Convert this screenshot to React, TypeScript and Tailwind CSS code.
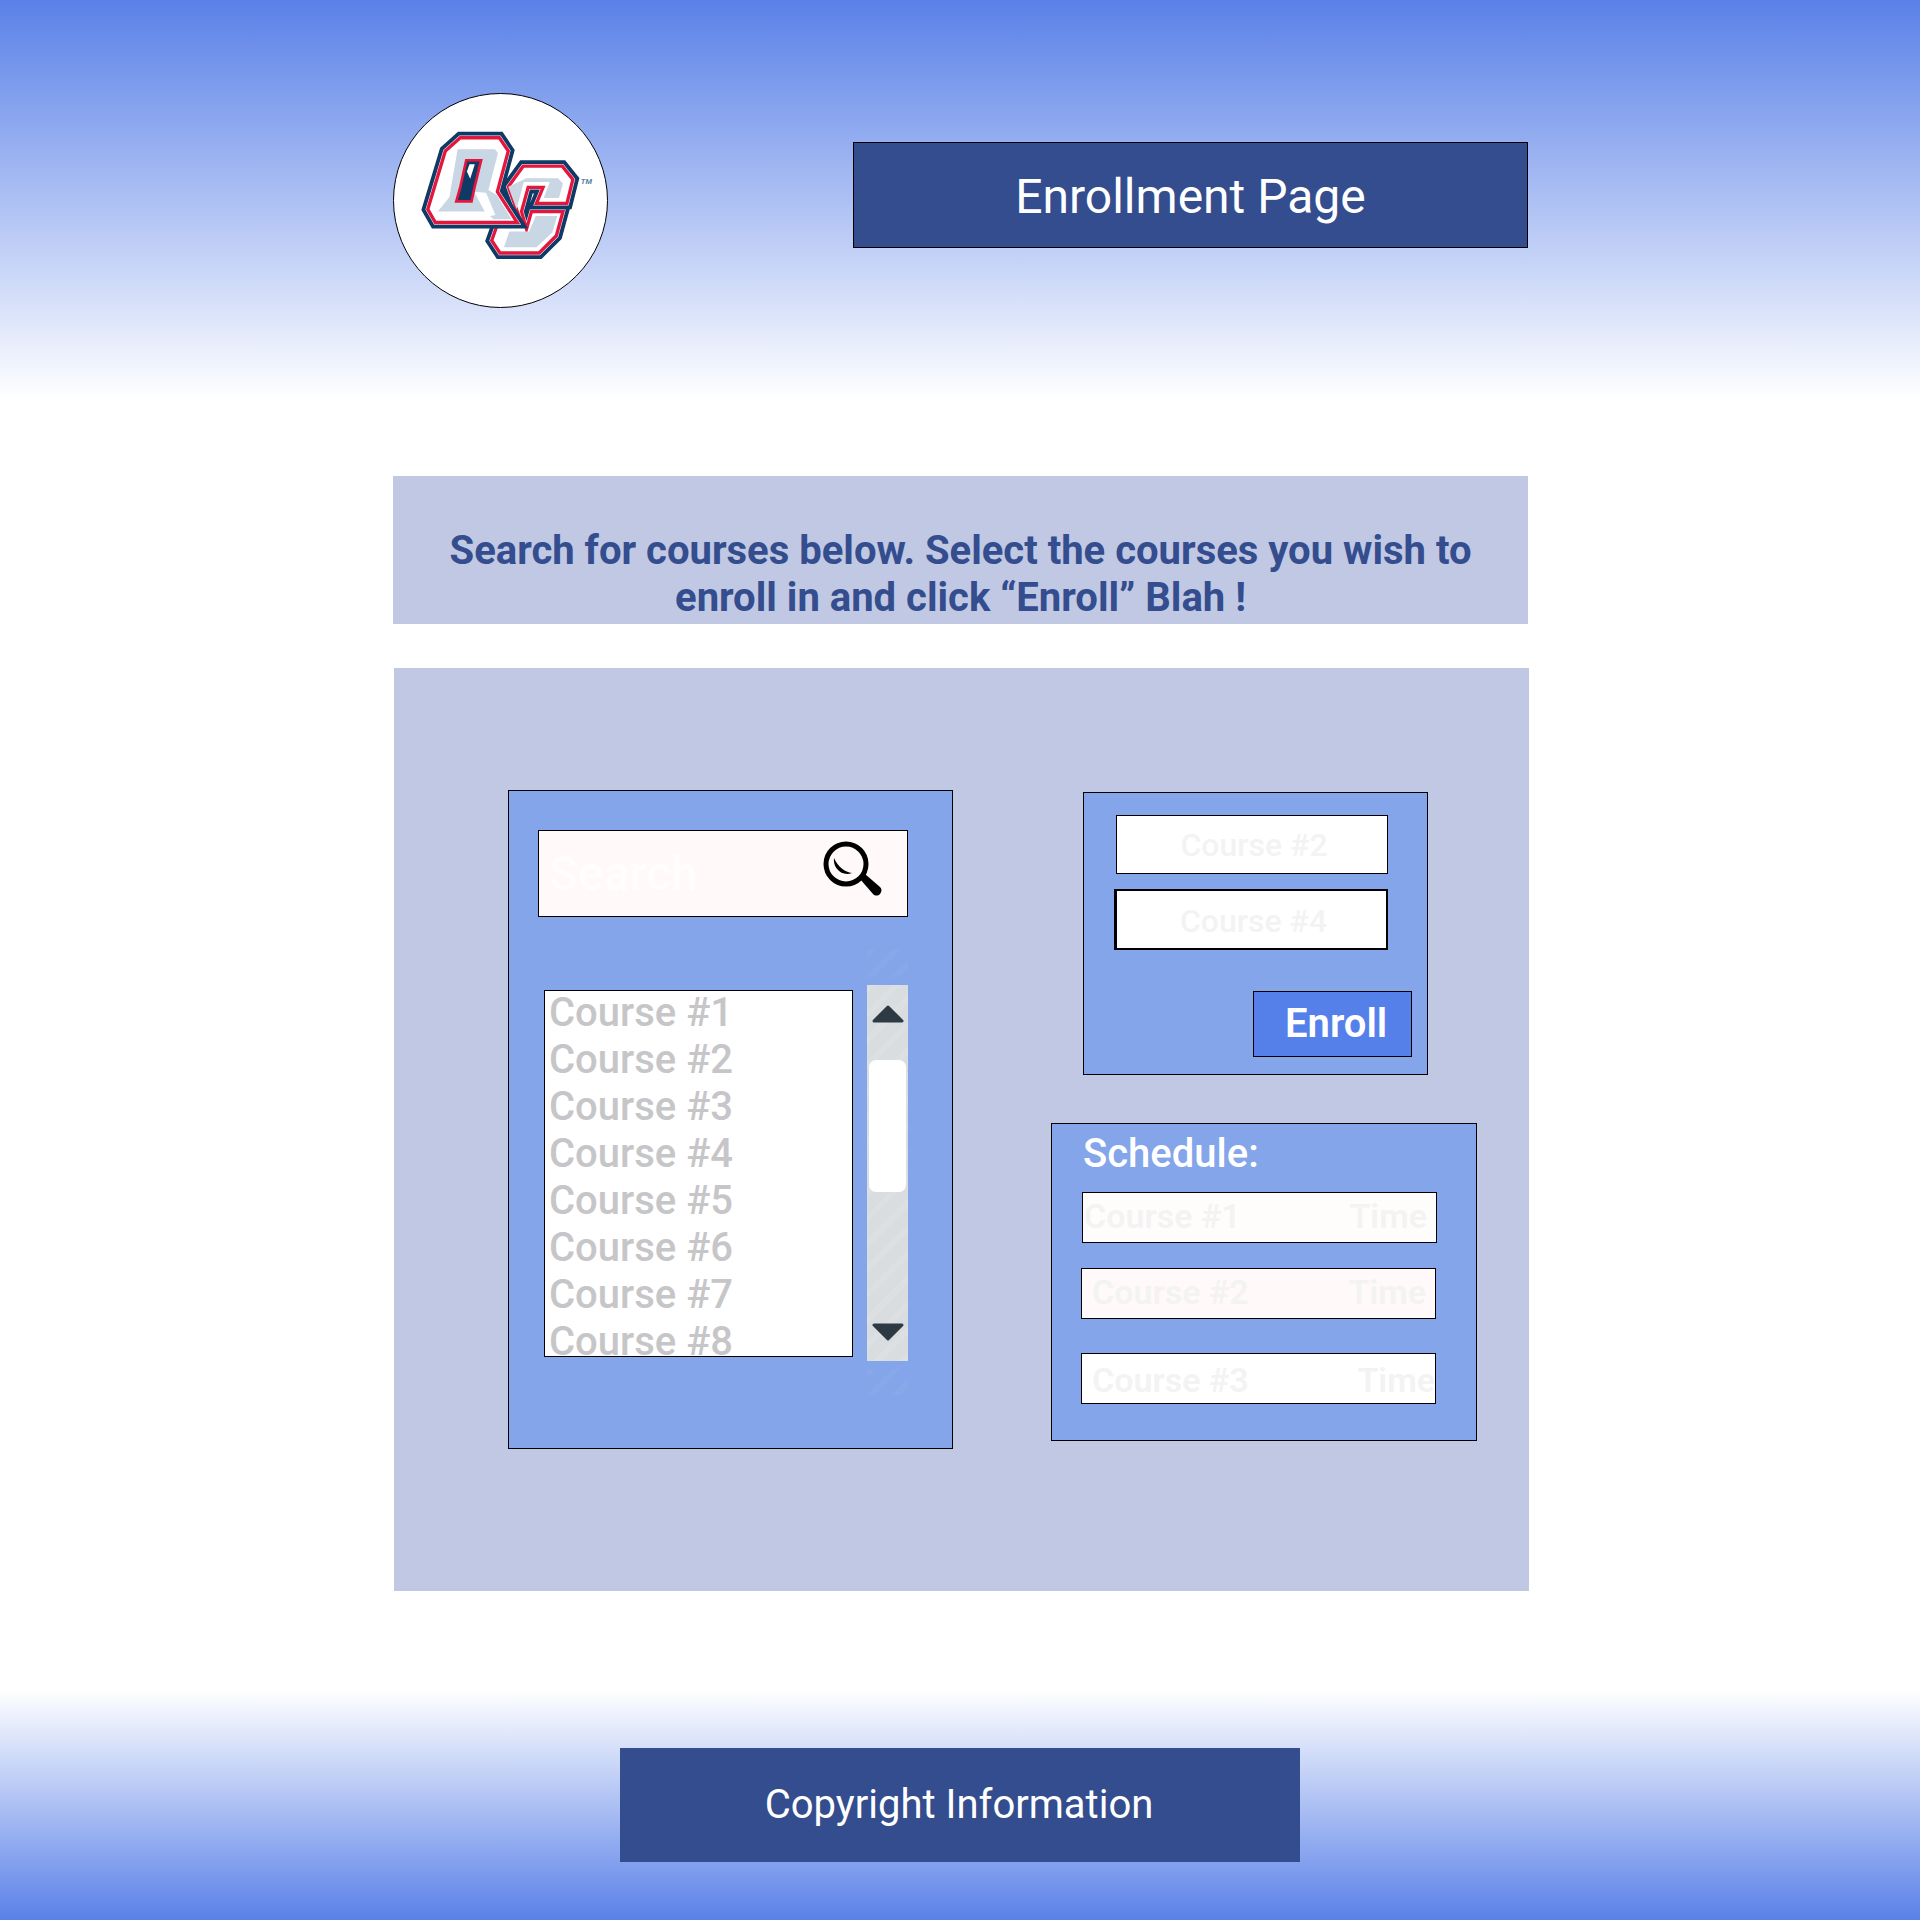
const courses = ["Course #1", "Course #2", "Course #3", "Course #4", "Course #5", "Course #6", "Course #7", "Course #8"];

const hatch =
  "bg-[repeating-linear-gradient(135deg,rgba(255,255,255,0.1)_0px,rgba(255,255,255,0.1)_6px,rgba(255,255,255,0)_6px,rgba(255,255,255,0)_18px)]";
const faintHatch =
  "bg-[repeating-linear-gradient(135deg,rgba(255,255,255,0.035)_0px,rgba(255,255,255,0.035)_6px,rgba(255,255,255,0)_6px,rgba(255,255,255,0)_18px)]";

const qPath = "M240 172H358L385 212L352 335L412 428H305L296 428H165L142 388L195 212Z";
const cPath = "M430 258H548L580 298L562 370H470L490 322H445L425 395L440 448L455 395H550L530 468L478 520H360L335 482L350 440L425 430L385 320Z";

const Logo = () => (
  <svg viewBox="40 40 643 643" className="w-full h-full">
    <g strokeLinejoin="miter" strokeMiterlimit={4}>
      {/* C sits behind the Q */}
      <path d={cPath} fill="#0f3a66" stroke="#0f3a66" strokeWidth={36} />
      <path d={cPath} fill="none" stroke="#f4f6fa" strokeWidth={13} />
      <path d={cPath} fill="#fff" stroke="#e3173e" strokeWidth={10} />
      <path d="M440 294H535L550 310L538 354H492L510 306H432L410 388L385 320Z" fill="#c9d6e4" />
      <path d="M468 408H533L518 458L470 503H372L388 455H448Z" fill="#c9d6e4" />

      <path d={qPath} fill="#0f3a66" stroke="#0f3a66" strokeWidth={36} />
      <path d={qPath} fill="none" stroke="#f4f6fa" strokeWidth={13} />
      <path d={qPath} fill="#fff" stroke="#e3173e" strokeWidth={10} />
      <path d="M232 207H345L354 218L325 330L350 345L395 418H340L315 395H172L207 352Z" fill="#c9d6e4" />
      <path d="M282 335L318 338L346 405L322 410Z" fill="#fff" />
      <path d="M258 240H303L284 318L274 364H228L240 322Z" fill="#0f3a66" stroke="#e3173e" strokeWidth={8} />
      <path d="M268 252H284L270 296L260 274Z" fill="#fff" />
    </g>
    <text x="604" y="311" fill="#5b7fa3" fontSize="23" fontStyle="italic" fontWeight="700" fontFamily="Roboto, sans-serif">TM</text>
  </svg>
);

const SearchIcon = () => (
  <svg width="60" height="60" viewBox="0 0 60 60" fill="none">
    <circle cx="23" cy="23" r="20" stroke="#000" strokeWidth="5" />
    <path d="M11 17C9.5 27 19 36 29 32C22 31 15 26 11 17Z" fill="#000" />
    <path d="M37 38L42 33L57 46C59 48 59 50 57 53C55 55 52 55 50 53Z" fill="#000" />
  </svg>
);

const Arrow = ({ down }: { down?: boolean }) => (
  <svg width="32" height="19" viewBox="0 0 32 19" className={down ? "rotate-180" : ""}>
    <path d="M16 2L30 16H2Z" fill="#2d3a43" stroke="#2d3a43" strokeWidth="3" strokeLinejoin="round" />
  </svg>
);

const App = () => {
  return (
    <div className="w-[1920px] h-[1920px] overflow-hidden pt-[93px] font-['Roboto',sans-serif] bg-[linear-gradient(to_bottom,#5a81e8_0px,#ffffff_400px,#ffffff_1690px,#5a81e8_1920px)]">
      {/* HEADER */}
      <div className="flex ml-[393px]">
        <div className="w-[215px] h-[215px] rounded-full bg-white border border-black overflow-hidden">
          <Logo />
        </div>
        <div className="w-[675px] h-[106px] mt-[49px] ml-[245px] flex items-center justify-center bg-[#334d8e] border border-black text-white text-[48px] pt-[3px]">
          Enrollment Page
        </div>
      </div>

      {/* INSTRUCTIONS */}
      <div className="w-[1135px] h-[148px] ml-[393px] mt-[168px] pb-[3px] bg-[#c0c8e3] flex items-end justify-center text-center text-[40px] leading-[47px] font-bold text-[#334d8e]">
        <p className="w-[1080px]">Search for courses below. Select the courses you wish to enroll in and click “Enroll” Blah !</p>
      </div>

      {/* MAIN */}
      <div className="w-[1135px] h-[923px] ml-[394px] mt-[44px] bg-[#c0c8e3] flex pt-[122px] pl-[114px]">
        <div className="w-[445px] h-[659px] bg-[#84a5e9] border border-black pl-[29px] pt-[39px]">
          <div className="w-[370px] h-[87px] bg-[#fff9f9] border border-black flex items-center justify-between pl-[10px] pr-[24px] text-[48px] font-medium text-[#fffdfd]">
            <span>Search</span>
            <div className="-mt-[6px]"><SearchIcon /></div>
          </div>
          <div className="flex mt-[68px]">
            <div className="w-[309px] h-[367px] mt-[5px] ml-[6px] bg-white border border-black overflow-hidden pl-[4px] text-[40px] leading-[47px] font-medium text-[#c6c6c8]">
              <div className="-mt-[2px]">
                {courses.map((course) => (
                  <div key={course}>{course}</div>
                ))}
              </div>
            </div>
            <div className={`relative w-[41px] h-[376px] ml-[14px] bg-[#d9dde0] flex flex-col items-center ${hatch}`}>
              {/* faint hatching spills past the track */}
              <div className={`absolute -top-[35px] left-0 w-full h-[27px] ${faintHatch}`} />
              <div className={`absolute -bottom-[34px] left-0 w-full h-[26px] ${faintHatch}`} />
              <div className="mt-[20px]"><Arrow /></div>
              <div className="w-[37px] h-[132px] mt-[36px] rounded-[7px] bg-white" />
              <div className="mt-auto mb-[20px]"><Arrow down /></div>
            </div>
          </div>
        </div>

        <div className="ml-[98px] pt-[2px]">
          <div className="w-[345px] h-[283px] ml-[32px] bg-[#84a5e9] border border-black relative pt-[22px]">
            <div className="w-[272px] h-[59px] ml-[32px] pl-[4px] bg-white border border-black flex items-center justify-center text-[32px] font-medium text-[#f3f3f3]">
              Course #2
            </div>
            <div className="w-[274px] h-[61px] ml-[30px] mt-[15px] pl-[4px] pt-[2px] bg-white border-[2px] border-l-[3px] border-black flex items-center justify-center text-[32px] font-medium text-[#f3f3f3]">
              Course #4
            </div>
            <div className="w-[159px] h-[66px] ml-[169px] mt-[41px] pl-[31px] bg-[#5580e9] border border-black flex items-center text-[40px] font-semibold text-white">
              Enroll
            </div>
          </div>

          <div className="w-[426px] h-[318px] mt-[48px] bg-[#84a5e9] border border-black">
            <div className="ml-[31px] mt-[6px] h-[47px] text-[40px] leading-[47px] font-medium text-white">Schedule:</div>
            <div className="w-[355px] h-[51px] ml-[30px] mt-[15px] pb-[2px] bg-[#fffdfc] border border-black flex items-center justify-between pl-[1px] pr-[9px] text-[34px] font-semibold text-[#f3f3f3]">
              <span>Course #1</span>
              <span>Time</span>
            </div>
            <div className="w-[355px] h-[51px] ml-[29px] mt-[25px] pb-[2px] bg-[#fff9f9] border border-black flex items-center justify-between pl-[10px] pr-[9px] text-[34px] font-semibold text-[#f3f3f3]">
              <span>Course #2</span>
              <span>Time</span>
            </div>
            <div className="w-[355px] h-[51px] ml-[29px] mt-[34px] pt-[3px] bg-white border border-black flex items-center justify-between pl-[10px] text-[34px] font-semibold text-[#f3f3f3]">
              <span>Course #3</span>
              <span>Time</span>
            </div>
          </div>
        </div>
      </div>

      {/* FOOTER */}
      <div className="w-[680px] h-[114px] ml-[620px] mt-[157px] pr-[2px] bg-[#334d8e] flex items-center justify-center text-white text-[40px]">
        Copyright Information
      </div>
    </div>
  );
};

export default App;
